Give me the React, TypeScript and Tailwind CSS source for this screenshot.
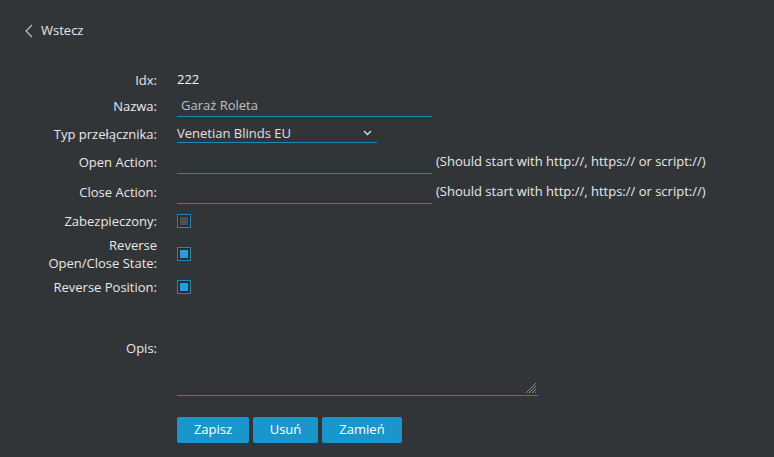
import React, { useState } from 'react';

const font = { fontFamily: '"Open Sans", "Noto Sans", sans-serif' };

interface CheckProps {
    checked: boolean;
    onToggle: () => void;
}

const Check: React.FC<CheckProps> = ({ checked, onToggle }) => (
    <div
        onClick={onToggle}
        className="w-[14px] h-[14px] border border-[#1e88b8] p-[2px] cursor-pointer bg-[#2b2e31]"
    >
        <div className={`w-full h-full ${checked ? 'bg-[#1ea0dc]' : 'bg-[#4c4f52]'}`} />
    </div>
);

const Label: React.FC<{ children: React.ReactNode }> = ({ children }) => (
    <div className="w-[157px] shrink-0 text-right text-[#e8e8e8] leading-[18px]">{children}</div>
);

const HINT = '(Should start with http://, https:// or script://)';

const App: React.FC = () => {
    const [name, setName] = useState('Garaż Roleta');
    const [switchType, setSwitchType] = useState('Venetian Blinds EU');
    const [openAction, setOpenAction] = useState('');
    const [closeAction, setCloseAction] = useState('');
    const [isProtected, setIsProtected] = useState(false);
    const [reverseState, setReverseState] = useState(true);
    const [reversePosition, setReversePosition] = useState(true);
    const [description, setDescription] = useState('');

    return (
        <div className="w-[774px] h-[457px] bg-[#323538] text-[13px] overflow-hidden" style={font}>
            {/* powrót */}
            <div className="flex items-center pt-[22px] pl-[24px] h-[40px] text-[#e8e8e8] cursor-pointer">
                <svg width="10" height="14" viewBox="0 0 10 14" className="mr-[7px]">
                    <polyline points="8,1 2,7 8,13" fill="none" stroke="#b8b8b8" strokeWidth="1.3" />
                </svg>
                <span>Wstecz</span>
            </div>

            <div className="flex flex-col">
                <div className="flex items-center mt-[31px] h-[18px]">
                    <Label>Idx:</Label>
                    <div className="ml-[20px] text-[#f0f0f0]">222</div>
                </div>

                <div className="flex items-center mt-[5px] h-[23px]">
                    <Label>Nazwa:</Label>
                    <input
                        value={name}
                        onChange={(e) => setName(e.target.value)}
                        className="ml-[20px] w-[255px] h-[23px] pl-[4px] bg-transparent border-b border-[#1e88b8] text-[#bfc1c3] outline-none"
                    />
                </div>

                <div className="flex items-center mt-[7px] h-[19px]">
                    <Label>Typ przełącznika:</Label>
                    <div className="ml-[20px] relative w-[200px] h-[19px] border-b border-[#1e88b8]">
                        <select
                            value={switchType}
                            onChange={(e) => setSwitchType(e.target.value)}
                            className="appearance-none w-full h-full bg-transparent text-[#e0e0e0] outline-none leading-[18px]"
                        >
                            <option className="bg-[#323538]">Venetian Blinds EU</option>
                            <option className="bg-[#323538]">Venetian Blinds US</option>
                            <option className="bg-[#323538]">Blinds</option>
                        </select>
                        <svg width="9" height="6" viewBox="0 0 9 6" className="absolute right-[5px] top-[6px] pointer-events-none">
                            <polyline points="1,1 4.5,4.5 8,1" fill="none" stroke="#d8d8d8" strokeWidth="1.4" />
                        </svg>
                    </div>
                </div>

                <div className="flex items-center mt-[7px] h-[24px]">
                    <Label>Open Action:</Label>
                    <input
                        value={openAction}
                        onChange={(e) => setOpenAction(e.target.value)}
                        className="ml-[20px] w-[255px] h-[24px] bg-transparent border-b border-[#1e88b8] text-[#e0e0e0] outline-none"
                    />
                    <span className="ml-[4px] text-[#e8e8e8]">{HINT}</span>
                </div>

                <div className="flex items-center mt-[6px] h-[24px]">
                    <Label>Close Action:</Label>
                    <input
                        value={closeAction}
                        onChange={(e) => setCloseAction(e.target.value)}
                        className="ml-[20px] w-[255px] h-[24px] bg-transparent border-b border-[#1e88b8] text-[#e0e0e0] outline-none"
                    />
                    <span className="ml-[4px] text-[#e8e8e8]">{HINT}</span>
                </div>

                <div className="flex items-center mt-[8px] h-[18px]">
                    <Label>Zabezpieczony:</Label>
                    <div className="ml-[20px]">
                        <Check checked={isProtected} onToggle={() => setIsProtected(!isProtected)} />
                    </div>
                </div>

                <div className="flex items-center mt-[6px] h-[36px]">
                    <Label>
                        Reverse
                        <br />
                        Open/Close State:
                    </Label>
                    <div className="ml-[20px]">
                        <Check checked={reverseState} onToggle={() => setReverseState(!reverseState)} />
                    </div>
                </div>

                <div className="flex items-center mt-[6px] h-[18px]">
                    <Label>Reverse Position:</Label>
                    <div className="ml-[20px]">
                        <Check checked={reversePosition} onToggle={() => setReversePosition(!reversePosition)} />
                    </div>
                </div>

                <div className="flex items-start mt-[43px]">
                    <Label>Opis:</Label>
                    <div className="ml-[20px] relative w-[361px] h-[57px] border-b border-[#1e88b8]">
                        <textarea
                            value={description}
                            onChange={(e) => setDescription(e.target.value)}
                            className="block w-full h-full bg-transparent text-[#e0e0e0] outline-none resize-none"
                        />
                        {/* uchwyt zmiany rozmiaru */}
                        <svg width="12" height="12" viewBox="0 0 12 12" className="absolute right-[1px] bottom-[1px] pointer-events-none">
                            <line x1="11" y1="1" x2="1" y2="11" stroke="#8a8c8e" strokeWidth="1" />
                            <line x1="11" y1="4" x2="4" y2="11" stroke="#8a8c8e" strokeWidth="1" />
                            <line x1="11" y1="7" x2="7" y2="11" stroke="#8a8c8e" strokeWidth="1" />
                            <line x1="11" y1="10" x2="10" y2="11" stroke="#8a8c8e" strokeWidth="1" />
                        </svg>
                    </div>
                </div>

                <div className="flex gap-[4px] mt-[21px] ml-[177px]">
                    <button className="h-[26px] w-[72px] rounded-[2px] bg-[#1a96cc] text-white">Zapisz</button>
                    <button className="h-[26px] w-[65px] rounded-[2px] bg-[#1a96cc] text-white">Usuń</button>
                    <button className="h-[26px] w-[80px] rounded-[2px] bg-[#1a96cc] text-white">Zamień</button>
                </div>
            </div>
        </div>
    );
};

export default App;
